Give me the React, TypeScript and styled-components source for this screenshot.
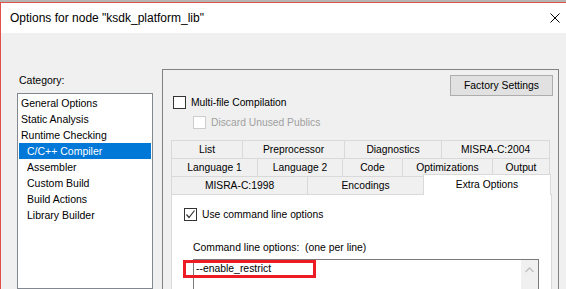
import React from "react";
import styled, { createGlobalStyle } from "styled-components";

const GlobalStyle = createGlobalStyle`
  * {
    box-sizing: border-box;
  }

  body {
    margin: 0;
    background: #ffffff;
    font-family: "Liberation Sans", Arial, sans-serif;
  }
`;

const Window = styled.div`
  display: flex;
  flex-direction: column;
  width: 566px;
  height: 289px;
  overflow: hidden;
  border-top: 2px solid #b4b4b4;
  background: #f0f0f0;
`;

const TitleBar = styled.div`
  display: flex;
  flex: none;
  align-items: center;
  justify-content: space-between;
  height: 31px;
  padding: 0 6px 0 9px;
  background: #ffffff;
  border-top: 1px solid #e0514a;
  border-left: 1px solid #e0514a;
  font-size: 12px;
  color: #000000;
`;

const CloseIcon = () => (
  <svg width="10" height="10" viewBox="0 0 10 10">
    <path d="M0.5 0.5 L9.5 9.5 M9.5 0.5 L0.5 9.5" stroke="#000" strokeWidth="1" fill="none" />
  </svg>
);

const Body = styled.div`
  display: flex;
  flex: 1;
  min-height: 0;
  overflow: hidden;
  gap: 9px;
  padding-left: 16px;
  border-left: 1px solid #e0514a;
`;

const CategoryColumn = styled.div`
  display: flex;
  flex: none;
  flex-direction: column;
  width: 136px;
  padding-top: 40px;
`;

const CategoryLabel = styled.div`
  height: 14px;
  line-height: 14px;
  padding-left: 2px;
  margin-bottom: 6px;
  font-size: 10.5px;
`;

const ListBox = styled.div`
  flex: 1;
  padding: 1px;
  background: #ffffff;
  border: 1px solid #828790;
`;

const ListItem = styled.div<{ $child?: boolean; $selected?: boolean }>`
  height: 16px;
  line-height: 16px;
  padding-left: ${(p) => (p.$child ? 8 : 2)}px;
  font-size: 10.5px;
  color: ${(p) => (p.$selected ? "#ffffff" : "#000000")};
  background: ${(p) => (p.$selected ? "#0078d7" : "transparent")};
`;

const OptionsPanel = styled.div`
  display: flex;
  flex: none;
  flex-direction: column;
  align-self: flex-start;
  width: 397px;
  margin-top: 36px;
  border: 1px solid #828282;
  border-bottom: none;

  & > * {
    flex: none;
  }
`;

const FactoryButton = styled.button`
  align-self: flex-end;
  width: 103px;
  height: 21px;
  margin: 5px 5px 0 0;
  padding: 0;
  background: #e1e1e1;
  border: 1px solid #adadad;
  font-family: "Liberation Sans", Arial, sans-serif;
  font-size: 10.4px;
  color: #000000;
`;

const CheckRow = styled.div<{ $disabled?: boolean }>`
  display: flex;
  align-items: center;
  gap: 5px;
  height: 13px;
  font-size: 10.3px;
  color: ${(p) => (p.$disabled ? "#a0a0a0" : "#000000")};
`;

const Box = styled.span<{ $disabled?: boolean }>`
  display: flex;
  align-items: center;
  justify-content: center;
  width: 13px;
  height: 13px;
  background: #ffffff;
  border: 1px solid ${(p) => (p.$disabled ? "#cccccc" : "#333333")};
`;

const CheckBox = ({ checked, disabled }: { checked?: boolean; disabled?: boolean }) => (
  <Box $disabled={disabled}>
    {checked && (
      <svg width="11" height="11" viewBox="0 0 11 11">
        <path d="M1.5 5.5 L4 8.5 L9.5 1.5" stroke="#333" strokeWidth="1.2" fill="none" />
      </svg>
    )}
  </Box>
);

const PanelChecks = styled.div`
  display: flex;
  flex-direction: column;
  gap: 7px;
  padding-left: 10px;
`;

const SubCheck = styled.div`
  padding-left: 20px;
`;

const TabStrip = styled.div`
  display: flex;
  flex-direction: column;
  margin: 11px 0 0 8px;
`;

const TabRow = styled.div`
  display: flex;
  height: 18px;
`;

const Tab = styled.div<{ $active?: boolean }>`
  display: flex;
  align-items: center;
  justify-content: center;
  flex: none;
  border-top: 1px solid #d9d9d9;
  border-left: 1px solid #d9d9d9;
  background: ${(p) => (p.$active ? "#ffffff" : "#f0f0f0")};
  font-size: 10.3px;
  color: #000000;

  &:last-child {
    border-right: 1px solid #d9d9d9;
  }

  ${(p) =>
    p.$active &&
    `
    position: relative;
    z-index: 1;
    height: 21px;
    margin-top: -2px;
    padding-bottom: 2px;
  `}
`;

const TabPage = styled.div`
  width: 381px;
  height: 100px;
  padding: 13px 0 0 12px;
  background: #ffffff;
  border: 1px solid #d9d9d9;
`;

const CommandLabel = styled.div`
  height: 14px;
  line-height: 14px;
  margin: 20px 0 0 9px;
  font-size: 10.4px;
  color: #000000;
`;

const CommandBox = styled.div`
  position: relative;
  display: flex;
  width: 346px;
  height: 60px;
  margin: 4px 0 0 9px;
  border: 1px solid #7a7a7a;
`;

const CommandText = styled.div`
  flex: 1;
  height: 16px;
  line-height: 16px;
  padding: 1px 0 0 2px;
  font-size: 10.4px;
  color: #000000;
`;

const ScrollTrack = styled.div`
  display: flex;
  justify-content: center;
  width: 17px;
  padding-top: 7px;
  background: #f0f0f0;
`;

const Highlight = styled.div`
  position: absolute;
  left: -11px;
  top: 0;
  width: 133px;
  height: 18px;
  border: 3px solid #ed1c24;
`;

const tabRows = [
  [
    { label: "List", width: 71 },
    { label: "Preprocessor", width: 102 },
    { label: "Diagnostics", width: 97 },
    { label: "MISRA-C:2004", width: 109 },
  ],
  [
    { label: "Language 1", width: 86 },
    { label: "Language 2", width: 85 },
    { label: "Code", width: 60 },
    { label: "Optimizations", width: 90 },
    { label: "Output", width: 58 },
  ],
  [
    { label: "MISRA-C:1998", width: 136 },
    { label: "Encodings", width: 116 },
    { label: "Extra Options", width: 128, active: true },
  ],
];

const categories = [
  { label: "General Options" },
  { label: "Static Analysis" },
  { label: "Runtime Checking" },
  { label: "C/C++ Compiler", child: true, selected: true },
  { label: "Assembler", child: true },
  { label: "Custom Build", child: true },
  { label: "Build Actions", child: true },
  { label: "Library Builder", child: true },
];

export default function App() {
  return (
    <>
      <GlobalStyle />
      <Window>
        <TitleBar>
          <span>Options for node "ksdk_platform_lib"</span>
          <CloseIcon />
        </TitleBar>
        <Body>
          <CategoryColumn>
            <CategoryLabel>Category:</CategoryLabel>
            <ListBox>
              {categories.map((c) => (
                <ListItem key={c.label} $child={c.child} $selected={c.selected}>
                  {c.label}
                </ListItem>
              ))}
            </ListBox>
          </CategoryColumn>
          <OptionsPanel>
            <FactoryButton>Factory Settings</FactoryButton>
            <PanelChecks>
              <CheckRow>
                <CheckBox />
                Multi-file Compilation
              </CheckRow>
              <SubCheck>
                <CheckRow $disabled>
                  <CheckBox disabled />
                  Discard Unused Publics
                </CheckRow>
              </SubCheck>
            </PanelChecks>
            <TabStrip>
              {tabRows.map((row, i) => (
                <TabRow key={i}>
                  {row.map((t) => (
                    <Tab key={t.label} $active={"active" in t} style={{ width: t.width }}>
                      {t.label}
                    </Tab>
                  ))}
                </TabRow>
              ))}
              <TabPage>
                <CheckRow>
                  <CheckBox checked />
                  Use command line options
                </CheckRow>
                <CommandLabel>Command line options:&nbsp; (one per line)</CommandLabel>
                <CommandBox>
                  <CommandText>--enable_restrict</CommandText>
                  <ScrollTrack>
                    <svg width="9" height="6" viewBox="0 0 9 6">
                      <path d="M0.5 5 L4.5 1 L8.5 5" stroke="#c2c2c2" strokeWidth="1.5" fill="none" />
                    </svg>
                  </ScrollTrack>
                  <Highlight />
                </CommandBox>
              </TabPage>
            </TabStrip>
          </OptionsPanel>
        </Body>
      </Window>
    </>
  );
}
